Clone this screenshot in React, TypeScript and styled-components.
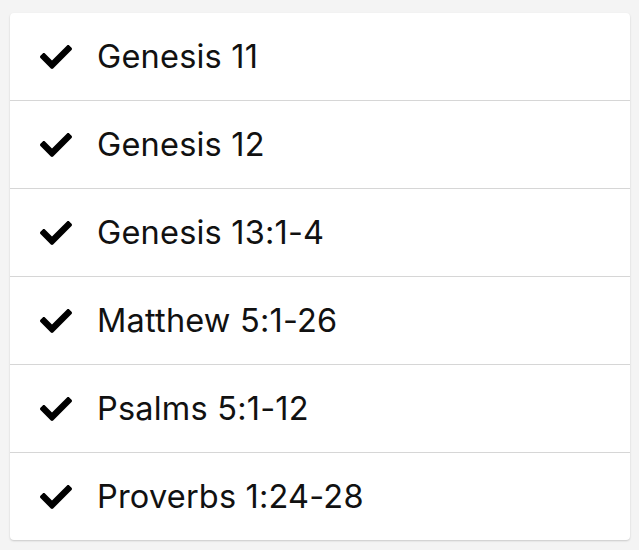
import * as React from "react";
import styled, { createGlobalStyle } from "styled-components";
import { FaCheck } from "react-icons/fa";

const GlobalStyle = createGlobalStyle`
  html, body {
    margin: 0;
    padding: 0;
    background: #f4f4f4;
  }
`;

const Page = styled.div`
  padding: 13px 9px 10px 10px;
  font-family: Inter, Roboto, "Noto Sans", sans-serif;
`;

const Card = styled.ul`
  list-style: none;
  margin: 0;
  padding: 0;
  background: #fff;
  border-radius: 4px;
  box-shadow: 0 1px 2px rgba(0, 0, 0, 0.18);
  overflow: hidden;
`;

const Row = styled.li`
  display: flex;
  align-items: center;
  height: 87px;
  padding-left: 30px;
  border-top: 1px solid #d6d6d6;

  &:first-child {
    border-top: none;
  }
`;

const Check = styled.span`
  display: flex;
  width: 57px;
  color: #000;
  font-size: 32px;
`;

const Title = styled.span`
  font-size: 32.5px;
  font-weight: 400;
  letter-spacing: 0.2px;
  color: #111;
`;

const readings = [
  "Genesis 11",
  "Genesis 12",
  "Genesis 13:1-4",
  "Matthew 5:1-26",
  "Psalms 5:1-12",
  "Proverbs 1:24-28",
];

const App: React.FC = () => {
  return (
    <Page>
      <GlobalStyle />
      <Card>
        {readings.map((r) => (
          <Row key={r}>
            <Check>
              <FaCheck />
            </Check>
            <Title>{r}</Title>
          </Row>
        ))}
      </Card>
    </Page>
  );
};

export default App;
